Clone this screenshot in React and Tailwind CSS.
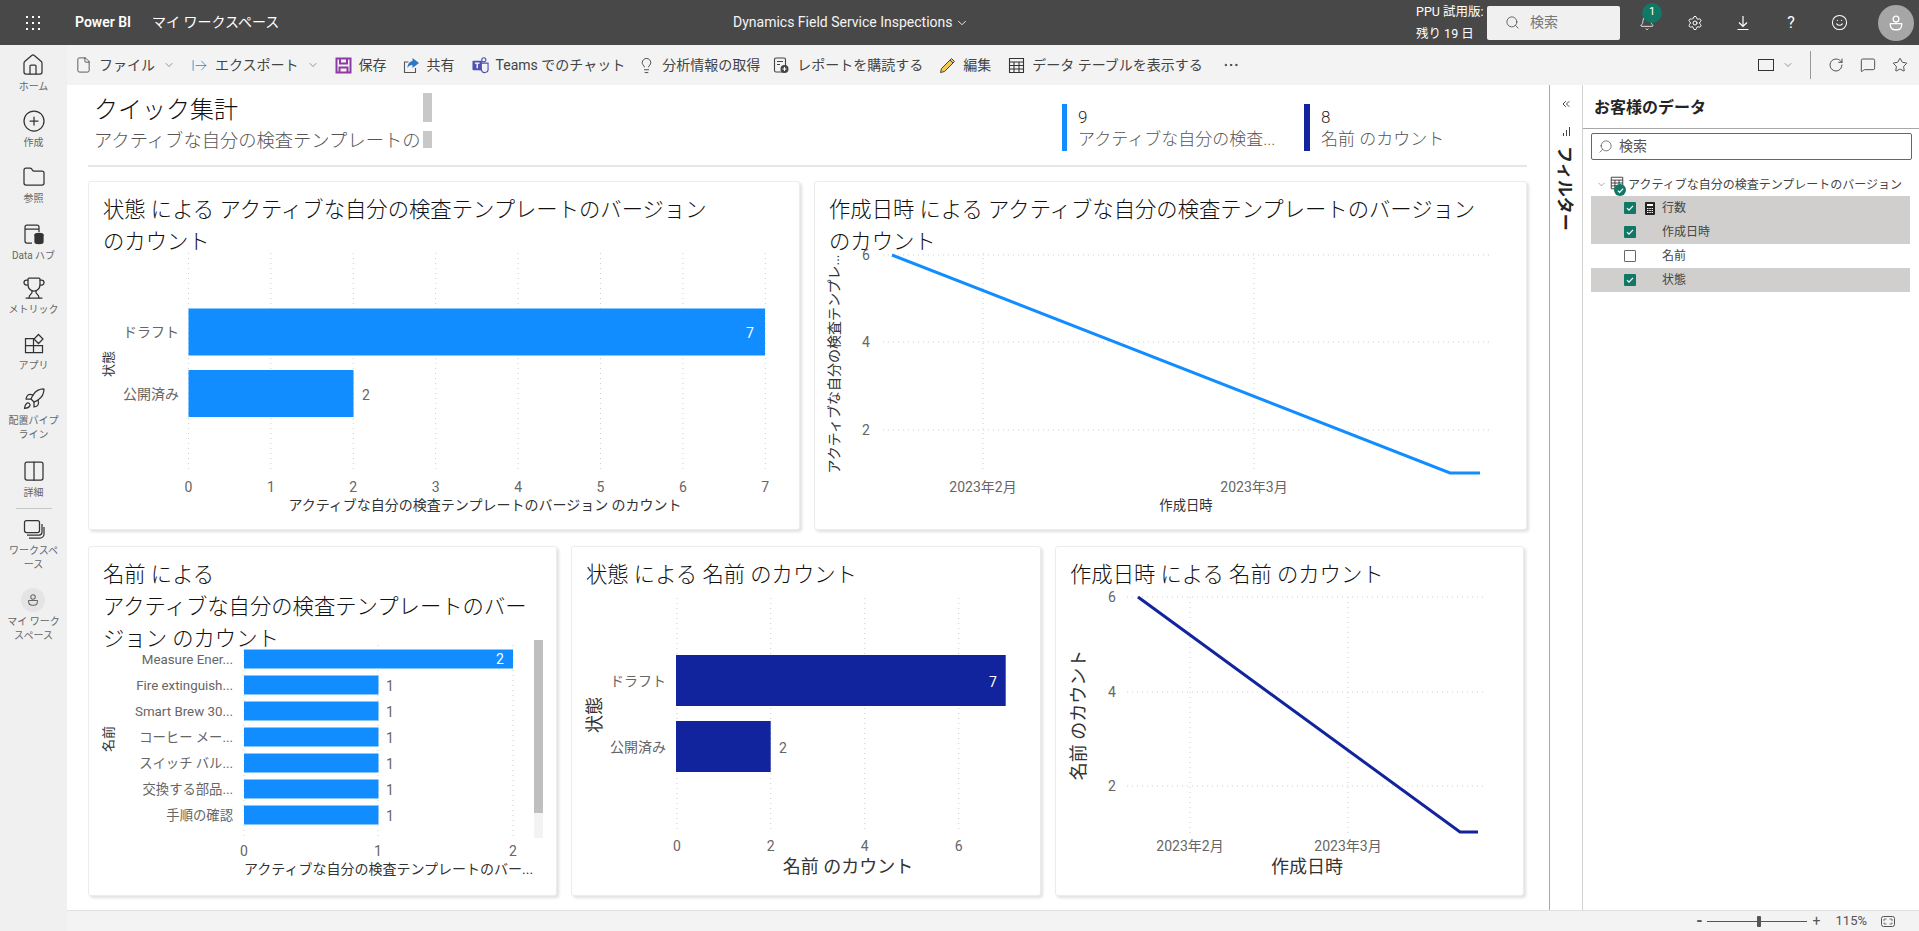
import { Home, CirclePlus, Folder, Trophy, Rocket, Columns2, File, ArrowRightFromLine, ChevronDown, Lightbulb, MoreHorizontal, RotateCw, MessageSquare, Star, Search, Bell, Settings, Smile, ChevronsLeft } from "lucide-react";

const grid = "#cfcfcf";
const blue = "#118DFF";
const navy = "#12239E";

function UserGlyph({ size = 16, color = "#555" }) {
  return (
    <svg width={size} height={size} viewBox="0 0 16 16" fill="none" stroke={color} strokeWidth="1.2">
      <circle cx="8" cy="4.5" r="2.6" />
      <path d="M3 8.5h10v1.5a4 4 0 0 1-4 4H7a4 4 0 0 1-4-4z" />
    </svg>
  );
}

function DataHubIcon() {
  return (
    <svg width="24" height="24" viewBox="0 0 24 24" fill="none" stroke="#333" strokeWidth="1.25">
      <path d="M11 21H6a2 2 0 0 1-2-2V5a2 2 0 0 1 2-2h10a2 2 0 0 1 2 2v5M4 7h14" />
      <ellipse cx="18" cy="13" rx="4" ry="1.6" fill="#333" />
      <path d="M14 13v7c0 1 1.8 1.6 4 1.6s4-.6 4-1.6v-7z" fill="#333" />
    </svg>
  );
}

function AppsIcon() {
  return (
    <svg width="24" height="24" viewBox="0 0 24 24" fill="none" stroke="#333" strokeWidth="1.25">
      <path d="M3.5 6.5h8v14h-8zM3.5 13.5h17v7h-9" />
      <path d="M16.5 2.5l4.5 4.5-4.5 4.5L12 7z" />
    </svg>
  );
}

function WorkspaceIcon() {
  return (
    <svg width="24" height="24" viewBox="0 0 24 24" fill="none" stroke="#333" strokeWidth="1.25">
      <rect x="2.5" y="3.5" width="15" height="12" rx="2" />
      <path d="M20 7v8a3 3 0 0 1-3 3H5M22 10v7a4 4 0 0 1-4 4H7" />
    </svg>
  );
}

function MyWorkspaceIcon() {
  return (
    <div className="w-6 h-6 rounded-full bg-[#e4e4e4] flex items-center justify-center">
      <UserGlyph size={14} color="#666" />
    </div>
  );
}

const sideItems = [
  { icon: <Home size={24} strokeWidth={1.25} color="#333" />, lines: ["ホーム"], gap: "mt-[8px]" },
  { icon: <CirclePlus size={24} strokeWidth={1.25} color="#333" />, lines: ["作成"], gap: "mt-[16px]" },
  { icon: <Folder size={24} strokeWidth={1.25} color="#333" />, lines: ["参照"], gap: "mt-[16px]" },
  { icon: <DataHubIcon />, lines: ["Data ハブ"], gap: "mt-[17px]" },
  { icon: <Trophy size={24} strokeWidth={1.25} color="#333" />, lines: ["メトリック"], gap: "mt-[14px]" },
  { icon: <AppsIcon />, lines: ["アプリ"], gap: "mt-[16px]" },
  { icon: <Rocket size={24} strokeWidth={1.25} color="#333" />, lines: ["配置パイプ", "ライン"], gap: "mt-[15px]" },
  { icon: <Columns2 size={24} strokeWidth={1.25} color="#333" />, lines: ["詳細"], gap: "mt-[18px]" },
  { divider: true },
  { icon: <WorkspaceIcon />, lines: ["ワークスペ", "ース"], gap: "mt-[8px]" },
  { icon: <MyWorkspaceIcon />, lines: ["マイ ワーク", "スペース"], gap: "mt-[17px]" },
];

function Sidebar() {
  return (
    <aside className="w-[67px] shrink-0 bg-[#f0f0f0] flex flex-col items-center">
      {sideItems.map((item, i) =>
        item.divider ? (
          <div key={i} className="w-9 h-px bg-[#c8c8c8] mt-[9px]" />
        ) : (
          <div key={i} className={`flex flex-col items-center ${item.gap}`}>
            {item.icon}
            <div className="mt-[3px] -mb-px text-[10px] leading-[14px] text-[#666] text-center whitespace-nowrap">
              {item.lines.map((line) => <div key={line}>{line}</div>)}
            </div>
          </div>
        )
      )}
    </aside>
  );
}

function Header() {
  return (
    <header className="h-[45px] shrink-0 bg-[#484848] text-white flex items-center">
      <svg width="14" height="14" viewBox="0 0 14 14" fill="#fff" className="ml-[26px]">
        {[1, 7, 13].flatMap((y) => [1, 7, 13].map((x) => <rect key={`${x}-${y}`} x={x - 1} y={y - 1} width="2" height="2" />))}
      </svg>
      <span className="ml-[35px] w-[63px] text-[14px] font-semibold whitespace-nowrap">Power BI</span>
      <span className="ml-[14px] w-[129px] text-[14px] whitespace-nowrap">マイ ワークスペース</span>
      <span className="ml-[452px] w-[214px] text-[14px] text-[#f4f4f4] whitespace-nowrap">Dynamics Field Service Inspections</span>
      <ChevronDown size={14} strokeWidth={1.5} className="ml-[8px]" />
      <div className="ml-[447px] w-[68px] text-[12.5px] leading-[22px] whitespace-nowrap">
        <div>PPU 試用版:</div>
        <div>残り 19 日</div>
      </div>
      <div className="ml-[3px] w-[133px] h-[34px] rounded-[2px] bg-[#f0f0f0] flex items-center text-[#777] text-[14px]">
        <Search size={15} strokeWidth={1.25} color="#444" className="ml-[18px]" />
        <span className="ml-[10px]">検索</span>
      </div>
      <div className="relative ml-[19px] w-4 h-4 flex items-center justify-center">
        <Bell size={16} strokeWidth={1.25} />
        <span className="absolute left-[3px] top-[-12px] w-5 h-5 rounded-full bg-[#117865] text-[11px] flex items-center justify-center">1</span>
      </div>
      <Settings size={16} strokeWidth={1.5} className="ml-[32px]" />
      <svg width="16" height="16" viewBox="0 0 16 16" fill="none" stroke="#fff" strokeWidth="1.2" className="ml-[32px]">
        <path d="M8 1v10.5M4 7.5l4 4 4-4M2.5 14.5h11" />
      </svg>
      <span className="ml-[34px] w-3 text-[16px] text-center">?</span>
      <Smile size={17} strokeWidth={1.5} className="ml-[34px]" />
      <div className="ml-[30px] w-9 h-9 rounded-full bg-[#a6a6a6] flex items-center justify-center">
        <UserGlyph size={18} color="#fff" />
      </div>
    </header>
  );
}

function SaveIcon() {
  return (
    <svg width="17" height="17" viewBox="0 0 17 17" fill="none" stroke="#8e3aa5" strokeWidth="2">
      <path d="M1.5 1.5h14v14h-14z" />
      <path d="M5 1.5v5h7v-5M4.5 15.5v-5h8v5" />
    </svg>
  );
}

function ShareIcon() {
  return (
    <svg width="17" height="17" viewBox="0 0 17 17" fill="none">
      <path d="M5.5 5H1.5v10.5h11V11" stroke="#555" strokeWidth="1.1" />
      <path d="M9.5 1l6.5 5-6.5 5V8C7 8 5.5 9 4.5 11c0-4 2-6.5 5-7z" fill="#2f78c4" />
    </svg>
  );
}

function TeamsIcon() {
  return (
    <svg width="18" height="18" viewBox="0 0 18 18">
      <circle cx="12.5" cy="3.5" r="2.2" fill="none" stroke="#4f52b2" strokeWidth="1.2" />
      <path d="M8 7h9v6a3.5 3.5 0 0 1-7 1H8z" fill="none" stroke="#4f52b2" strokeWidth="1.2" />
      <rect x="0.5" y="4.5" width="10" height="10" rx="1" fill="#4f52b2" />
      <path d="M3 7h5M5.5 7v5.5" stroke="#fff" strokeWidth="1.4" />
    </svg>
  );
}

function SubscribeIcon() {
  return (
    <svg width="17" height="17" viewBox="0 0 17 17" fill="none" stroke="#444" strokeWidth="1.1">
      <rect x="1.5" y="1" width="11" height="14" rx="1.5" />
      <path d="M4 4.5h6M4 7.5h3" />
      <circle cx="11.5" cy="12" r="4" fill="#444" stroke="none" />
      <path d="M9.5 12h4M11.5 10v4" stroke="#fff" />
    </svg>
  );
}

function PencilIcon() {
  return (
    <svg width="17" height="17" viewBox="0 0 17 17" fill="none" stroke="#444" strokeWidth="1">
      <path d="M12.5 1.5l3 3L5.5 14.5l-4 1 1-4z" fill="#f2c94c" />
      <path d="M11 3l3 3" />
    </svg>
  );
}

function TableIcon({ size = 17 }) {
  return (
    <svg width={size} height={size} viewBox="0 0 17 17" fill="none" stroke="#333" strokeWidth="1.1">
      <path d="M1.5 1.5h14v14h-14zM1.5 5h14M1.5 8.5h14M1.5 12h14M6 5v10.5M11 5v10.5" />
    </svg>
  );
}

function Tool({ icon, label, menu, className = "" }) {
  return (
    <div className={`flex items-center whitespace-nowrap ${className}`}>
      <span className="w-[17px] flex justify-center">{icon}</span>
      <span className="ml-[7px]">{label}</span>
      {menu && <ChevronDown size={12} strokeWidth={1.25} color="#555" className="ml-[8px]" />}
    </div>
  );
}

function Toolbar() {
  return (
    <div className="h-[40px] shrink-0 bg-[#f3f3f3] flex items-center pl-[8px] pr-[11px] gap-[16px] text-[14px] text-[#444]">
      <Tool icon={<File size={18} strokeWidth={1.1} color="#333" />} label="ファイル" menu />
      <Tool icon={<ArrowRightFromLine size={17} strokeWidth={1.1} color="#2f78c4" />} label="エクスポート" menu />
      <Tool icon={<SaveIcon />} label="保存" />
      <Tool icon={<ShareIcon />} label="共有" />
      <Tool icon={<TeamsIcon />} label="Teams でのチャット" className="ml-px" />
      <Tool icon={<Lightbulb size={17} strokeWidth={1.2} color="#333" />} label="分析情報の取得" className="-ml-[3px]" />
      <Tool icon={<SubscribeIcon />} label="レポートを購読する" className="-ml-[3px]" />
      <Tool icon={<PencilIcon />} label="編集" />
      <Tool icon={<TableIcon />} label="データ テーブルを表示する" className="ml-px" />
      <MoreHorizontal size={18} strokeWidth={1.25} color="#333" className="ml-[3px]" />
      <div className="ml-auto flex items-center">
        <div className="w-4 h-3 border border-[#333]" />
        <ChevronDown size={12} strokeWidth={1.25} color="#555" className="ml-[8px]" />
        <div className="ml-[16px] w-px h-[28px] bg-[#999]" />
        <RotateCw size={16} strokeWidth={1.25} color="#333" className="ml-[17px]" />
        <MessageSquare size={16} strokeWidth={1.25} color="#333" className="ml-[16px]" />
        <Star size={16} strokeWidth={1.25} color="#333" className="ml-[16px]" />
      </div>
    </div>
  );
}

function Label({ x, y, children, size = 14, color = "#666", anchor = "middle", rotate }) {
  return (
    <text
      x={x}
      y={y}
      fontSize={size}
      fill={color}
      textAnchor={anchor}
      dominantBaseline="central"
      transform={rotate ? `rotate(-90 ${x} ${y})` : undefined}
    >
      {children}
    </text>
  );
}

function Grid({ xs = [], ys = [], x1, x2, y1, y2 }) {
  return (
    <g stroke={grid} strokeWidth="1" strokeDasharray="1 4">
      {xs.map((x) => <line key={x} x1={x} x2={x} y1={y1} y2={y2} />)}
      {ys.map((y) => <line key={y} x1={x1} x2={x2} y1={y} y2={y} />)}
    </g>
  );
}

// viewBox is in page pixels so the numbers below read straight off the screenshot
function Plot({ box, children }) {
  const [x, y, w, h] = box;
  return (
    <svg width={w} height={h} viewBox={`${x} ${y} ${w} ${h}`} className="block overflow-visible">
      {children}
    </svg>
  );
}

function Card({ title, titleClass, children }) {
  return (
    <div className="bg-white rounded-[3px] border border-[#ececec] shadow-[2px_2px_3px_rgba(0,0,0,0.12)]">
      <div className={`pl-[14px] pr-[8px] pt-[12px] text-[21.33px] font-light leading-[32px] text-[#111] ${titleClass}`}>
        {title.map((line) => <div key={line} className="whitespace-nowrap">{line}</div>)}
      </div>
      {children}
    </div>
  );
}

function StatusBarChart() {
  const ticks = [0, 1, 2, 3, 4, 5, 6, 7];
  const xs = ticks.map((t) => 188.5 + t * 82.4);
  return (
    <Plot box={[89, 242, 710, 287]}>
      <Grid xs={xs} y1={253} y2={470} />
      <rect x="188.5" y="308.5" width="576.5" height="47" fill={blue} />
      <rect x="188.5" y="370" width="165" height="47" fill={blue} />
      <Label x={750} y={333} color="#fff">7</Label>
      <Label x={366} y={395}>2</Label>
      <Label x={179} y={332} anchor="end">ドラフト</Label>
      <Label x={179} y={394} anchor="end">公開済み</Label>
      <Label x={108} y={364} size={13} color="#333" rotate>状態</Label>
      {ticks.map((t, i) => <Label key={t} x={xs[i]} y={487}>{t}</Label>)}
      <Label x={485} y={505} size={14} color="#333">アクティブな自分の検査テンプレートのバージョン のカウント</Label>
    </Plot>
  );
}

function CreatedLineChart() {
  return (
    <Plot box={[815, 242, 711, 287]}>
      <Grid xs={[983, 1254]} ys={[255, 342, 430]} x1={883} x2={1489} y1={253} y2={470} />
      <polyline points="892,255 1450,473 1480,473" fill="none" stroke={blue} strokeWidth="3" />
      <Label x={866} y={255}>6</Label>
      <Label x={866} y={342}>4</Label>
      <Label x={866} y={430}>2</Label>
      <Label x={983} y={487}>2023年2月</Label>
      <Label x={1254} y={487}>2023年3月</Label>
      <Label x={1186} y={505} size={13.33} color="#333">作成日時</Label>
      <Label x={834} y={364} size={14} color="#333" rotate>アクティブな自分の検査テンプレ...</Label>
    </Plot>
  );
}

const names = [
  { name: "Measure Ener...", value: 2 },
  { name: "Fire extinguish...", value: 1 },
  { name: "Smart Brew 30...", value: 1 },
  { name: "コーヒー メー...", value: 1 },
  { name: "スイッチ バル...", value: 1 },
  { name: "交換する部品...", value: 1 },
  { name: "手順の確認", value: 1 },
];

function NameBarChart() {
  return (
    <Plot box={[89, 636, 467, 259]}>
      <Grid xs={[244, 378, 513]} y1={645} y2={838} />
      {names.map((row, i) => {
        const y = 659 + i * 26;
        return (
          <g key={row.name}>
            <rect x="244" y={y - 9.5} width={row.value * 134.5} height="19" fill={blue} />
            <Label x={233} y={y} size={13.33} anchor="end">{row.name}</Label>
            {row.value === 2 ? <Label x={500} y={y} color="#fff">2</Label> : <Label x={390} y={y + 1}>1</Label>}
          </g>
        );
      })}
      <rect x="534" y="640" width="9" height="198" fill="#f3f3f3" />
      <rect x="534" y="640" width="9" height="173" fill="#bfbfbf" />
      <Label x={244} y={851}>0</Label>
      <Label x={378} y={851}>1</Label>
      <Label x={513} y={851}>2</Label>
      <Label x={244} y={869} size={14} color="#333" anchor="start">アクティブな自分の検査テンプレートのバー...</Label>
      <Label x={108} y={739} size={13} color="#333" rotate>名前</Label>
    </Plot>
  );
}

function NameStatusChart() {
  const ticks = [0, 2, 4, 6];
  const xs = [677, 770.7, 864.7, 958.7];
  return (
    <Plot box={[572, 587, 468, 308]}>
      <Grid xs={xs} y1={598} y2={833} />
      <rect x="676" y="655" width="329.7" height="51" fill={navy} />
      <rect x="676" y="721" width="94.7" height="51" fill={navy} />
      <Label x={993} y={682} color="#fff">7</Label>
      <Label x={783} y={748}>2</Label>
      <Label x={666} y={681} anchor="end">ドラフト</Label>
      <Label x={666} y={747} anchor="end">公開済み</Label>
      {ticks.map((t, i) => <Label key={t} x={xs[i]} y={846}>{t}</Label>)}
      <Label x={848} y={866} size={18} color="#333">名前 のカウント</Label>
      <Label x={594} y={715} size={18} color="#333" rotate>状態</Label>
    </Plot>
  );
}

function NameLineChart() {
  return (
    <Plot box={[1056, 587, 467, 308]}>
      <Grid xs={[1190, 1348]} ys={[597, 692, 786]} x1={1127} x2={1487} y1={597} y2={833} />
      <polyline points="1138,597 1460,832 1478,832" fill="none" stroke={navy} strokeWidth="3" />
      <Label x={1112} y={597}>6</Label>
      <Label x={1112} y={692}>4</Label>
      <Label x={1112} y={786}>2</Label>
      <Label x={1190} y={846}>2023年2月</Label>
      <Label x={1348} y={846}>2023年3月</Label>
      <Label x={1307} y={866} size={18} color="#333">作成日時</Label>
      <Label x={1078} y={715} size={18} color="#333" rotate>名前 のカウント</Label>
    </Plot>
  );
}

function Kpi({ value, label, barClass, width }) {
  return (
    <div className={`flex h-[47px] ${width}`}>
      <div className={barClass} />
      <div className="ml-[11px] pt-[2px] text-[17px] font-light leading-[22px] whitespace-nowrap">
        <div className="text-[#252423]">{value}</div>
        <div className="text-[#555]">{label}</div>
      </div>
    </div>
  );
}

function SummaryHeader() {
  return (
    <div className="h-[80px] flex items-start">
      <div className="ml-[6px] pt-[8px] w-[338px] grid grid-cols-[329px_9px] gap-y-[9px]">
        <div className="h-[29px] text-[24px] font-light leading-[34px] text-[#111]">クイック集計</div>
        <div className="h-[29px] bg-[#c8c8c8]" />
        <div className="h-[17px] text-[18.3px] font-light leading-[20px] text-[#555] whitespace-nowrap">アクティブな自分の検査テンプレートの</div>
        <div className="h-[17px] bg-[#c8c8c8]" />
      </div>
      <div className="ml-[630px] mt-[19px] flex">
        <Kpi value="9" label="アクティブな自分の検査..." barClass="w-[5px] bg-[#118DFF]" width="w-[242px]" />
        <Kpi value="8" label="名前 のカウント" barClass="w-[6px] bg-[#12239E]" width="w-[220px]" />
      </div>
    </div>
  );
}

function Canvas() {
  return (
    <main className="flex-1 bg-white pl-[21px] overflow-hidden">
      <SummaryHeader />
      <div className="h-[2px] w-[1439px] bg-[#e6e6e6]" />
      <div className="mt-[14px] grid grid-cols-[712px_713px] gap-x-[14px] h-[349px]">
        <Card title={["状態 による アクティブな自分の検査テンプレートのバージョン", "のカウント"]} titleClass="h-[60px]">
          <StatusBarChart />
        </Card>
        <Card title={["作成日時 による アクティブな自分の検査テンプレートのバージョン", "のカウント"]} titleClass="h-[60px]">
          <CreatedLineChart />
        </Card>
      </div>
      <div className="mt-[16px] grid grid-cols-[469px_470px_469px] gap-x-[14px] h-[350px]">
        <Card title={["名前 による", "アクティブな自分の検査テンプレートのバー", "ジョン のカウント"]} titleClass="h-[99px] -mb-[10px]">
          <NameBarChart />
        </Card>
        <Card title={["状態 による 名前 のカウント"]} titleClass="h-[40px]">
          <NameStatusChart />
        </Card>
        <Card title={["作成日時 による 名前 のカウント"]} titleClass="h-[40px]">
          <NameLineChart />
        </Card>
      </div>
    </main>
  );
}

function FilterPane() {
  return (
    <div className="w-[33px] shrink-0 border-l border-[#a8a8a8] flex flex-col items-center pt-[13px]">
      <ChevronsLeft size={12} strokeWidth={2} color="#444" />
      <div className="mt-[17px] flex items-end gap-[2px] h-[9px]">
        <div className="w-px h-[3px] bg-[#444]" />
        <div className="w-px h-[6px] bg-[#444]" />
        <div className="w-px h-[9px] bg-[#444]" />
      </div>
      <div className="mt-[10px] -ml-[2px] text-[17px] font-semibold text-[#252423] [writing-mode:vertical-rl] [text-orientation:sideways] leading-[20px]">フィルター</div>
    </div>
  );
}

const fields = [
  { name: "行数", checked: true, calc: true },
  { name: "作成日時", checked: true },
  { name: "名前", checked: false },
  { name: "状態", checked: true },
];

function Check({ checked }) {
  if (!checked) return <div className="w-3 h-3 rounded-[1px] border border-[#666] bg-white" />;
  return (
    <div className="w-3 h-3 rounded-[1px] bg-[#117865] flex items-center justify-center">
      <svg width="8" height="8" viewBox="0 0 8 8" fill="none" stroke="#fff" strokeWidth="1.2">
        <path d="M1 4.2l2 2 4-4.4" />
      </svg>
    </div>
  );
}

function DataPane() {
  return (
    <div className="w-[337px] shrink-0 border-l border-[#d2d2d2]">
      <div className="h-[44px] pl-[11px] pt-[11px] text-[16px] leading-[24px] font-semibold text-[#252423] border-b border-[#a8a8a8]">お客様のデータ</div>
      <div className="mt-[4px] ml-[8px] w-[321px] h-[27px] rounded-[2px] border border-[#666] flex items-center text-[14px] text-[#555]">
        <Search size={15} strokeWidth={1} color="#333" className="ml-[6px] -scale-x-100" />
        <span className="ml-[6px]">検索</span>
      </div>
      <div className="mt-[13px] ml-[13px] h-[23px] flex items-center text-[12px] text-[#444] whitespace-nowrap">
        <ChevronDown size={11} strokeWidth={1} color="#444" />
        <div className="relative ml-[3px] w-[14px] h-[14px] mb-[3px]">
          <TableIcon size={14} />
          <div className="absolute left-[4px] top-[8px] w-3 h-3 rounded-full bg-[#117865] flex items-center justify-center">
            <svg width="7" height="7" viewBox="0 0 8 8" fill="none" stroke="#fff" strokeWidth="1.4">
              <path d="M1 4.2l2 2 4-4.4" />
            </svg>
          </div>
        </div>
        <span className="ml-[4px]">アクティブな自分の検査テンプレートのバージョン</span>
      </div>
      <div className="ml-[8px] w-[319px]">
        {fields.map((f) => (
          <div key={f.name} className={`h-[24px] flex items-center text-[12px] text-[#444] ${f.checked ? "bg-[#d0cfcd]" : ""}`}>
            <div className="ml-[33px]"><Check checked={f.checked} /></div>
            <div className="ml-[9px] w-[17px]">
              {f.calc && (
                <svg width="10" height="13" viewBox="0 0 10 13">
                  <rect width="10" height="13" rx="1" fill="#252423" />
                  <rect x="2" y="2" width="6" height="2" fill="#fff" />
                  <path d="M2 6h1.5v1H2zM4.3 6h1.5v1H4.3zM6.6 6H8v1H6.6zM2 8h1.5v1H2zM4.3 8h1.5v1H4.3zM6.6 8H8v1H6.6zM2 10h1.5v1H2zM4.3 10h1.5v1H4.3zM6.6 10H8v1H6.6z" fill="#fff" />
                </svg>
              )}
            </div>
            <span>{f.name}</span>
          </div>
        ))}
      </div>
    </div>
  );
}

function StatusBar() {
  return (
    <div className="h-[21px] shrink-0 bg-[#f3f3f3] border-t border-[#e0e0e0] flex items-center justify-end pr-[24px] text-[13px] text-[#555]">
      <span className="text-[16px] font-bold leading-none">-</span>
      <div className="relative ml-[4px] w-[100px] h-px bg-[#555]">
        <div className="absolute left-[50px] top-[-5px] w-[4px] h-[11px] rounded-[1px] bg-[#555]" />
      </div>
      <span className="ml-[6px] text-[14px] leading-none">+</span>
      <span className="ml-[15px]">115%</span>
      <svg width="14" height="11" viewBox="0 0 14 11" fill="none" stroke="#555" className="ml-[14px]">
        <rect x="0.5" y="0.5" width="13" height="10" rx="2" />
        <path d="M3 5V3h2.5M8.5 3H11v2M11 6.5V8H8.5M5.5 8H3V6.5" strokeWidth="0.8" />
      </svg>
    </div>
  );
}

export default function App() {
  return (
    <div className="h-screen w-full flex flex-col overflow-hidden bg-white [font-family:'Roboto','Noto_Sans_CJK_JP',sans-serif]">
      <Header />
      <div className="flex-1 flex min-h-0">
        <Sidebar />
        <div className="flex-1 flex flex-col min-w-0">
          <Toolbar />
          <div className="flex-1 flex min-h-0">
            <Canvas />
            <FilterPane />
            <DataPane />
          </div>
          <StatusBar />
        </div>
      </div>
    </div>
  );
}
